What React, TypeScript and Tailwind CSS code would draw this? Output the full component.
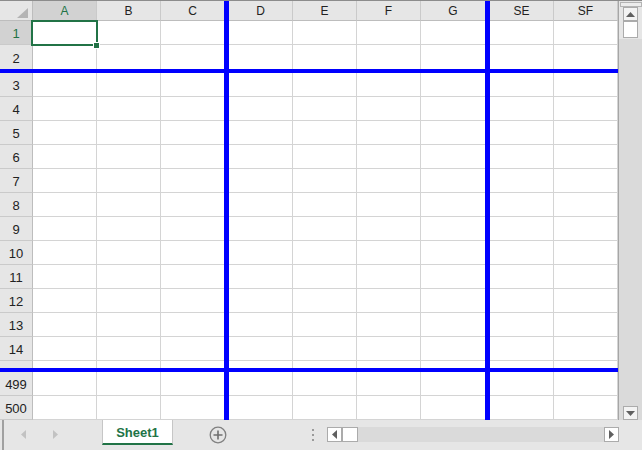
import clsx from 'clsx';

type Col = { id: string; blue?: boolean; w?: string; right?: boolean };

const COLS: Col[] = [
  { id: 'A', w: 'w-[64px]', right: true },
  { id: 'B', w: 'w-[64px]', right: true },
  { id: 'C', w: 'w-[63px]', right: false },
  { id: 'bar1', blue: true },
  { id: 'D', w: 'w-[64px]', right: true },
  { id: 'E', w: 'w-[64px]', right: true },
  { id: 'F', w: 'w-[64px]', right: true },
  { id: 'G', w: 'w-[64px]', right: false },
  { id: 'bar2', blue: true },
  { id: 'SE', w: 'w-[64px]', right: true },
  { id: 'SF', w: 'w-[64px]', right: true },
];

const ROWS = [3, 4, 5, 6, 7, 8, 9, 10, 11, 12, 13, 14];

function BlueV() {
  return <div className="w-[5px] h-full shrink-0 bg-[#0000ff]" />;
}

function BlueH() {
  return <div className="h-[4px] w-full shrink-0 bg-[#0000ff]" />;
}

function HeaderRow() {
  return (
    <div className="flex h-[20px] shrink-0">
      {/* corner */}
      <div className="relative w-[33px] h-full shrink-0 bg-[#e6e6e6] border-r border-b border-[#bdbdbd]">
        <svg className="absolute left-[17px] top-[7px]" width="12" height="11" viewBox="0 0 12 11">
          <polygon points="11,0 11,10 0,10" fill="#b4b4b4" />
        </svg>
      </div>
      {COLS.map((c) =>
        c.blue ? (
          <BlueV key={c.id} />
        ) : (
          <div
            key={c.id}
            className={clsx(
              'h-full shrink-0 flex items-center justify-center pt-[1px] text-[12px] border-b border-b-[#bdbdbd]',
              c.w,
              c.right && 'border-r border-r-[#cacaca]',
              c.id === 'A' ? 'bg-[#d2d2d2] text-[#217346]' : 'bg-[#e6e6e6] text-[#222222]'
            )}
          >
            {c.id}
          </div>
        )
      )}
    </div>
  );
}

interface DataRowProps {
  label?: string;
  selected?: boolean;
  bottom?: boolean;
  tall?: boolean;
}

function DataRow({ label, selected, bottom = true, tall = true }: DataRowProps) {
  return (
    <div className={clsx('flex shrink-0', tall ? 'h-[24px]' : 'h-[7px]')}>
      <div
        className={clsx(
          'w-[33px] h-full shrink-0 flex items-center justify-center pt-[3px] text-[13px] border-r border-r-[#bdbdbd]',
          bottom && 'border-b border-b-[#cacaca]',
          selected ? 'bg-[#d2d2d2] text-[#217346]' : 'bg-[#e6e6e6] text-[#222222]'
        )}
      >
        {label}
      </div>
      {COLS.map((c) =>
        c.blue ? (
          <BlueV key={c.id} />
        ) : (
          <div
            key={c.id}
            className={clsx(
              'h-full shrink-0 bg-white',
              c.w,
              c.right && 'border-r border-r-[#d4d4d4]',
              bottom && 'border-b border-b-[#d4d4d4]'
            )}
          />
        )
      )}
    </div>
  );
}

function VScrollBar() {
  return (
    <div className="w-[24px] h-full shrink-0 flex flex-col items-center border-l border-[#a6a6a6] bg-[#dadada]">
      <div className="w-full flex flex-col items-center bg-[#e6e6e6] pb-[1px]">
        <div className="mt-[1px] w-[22px] h-[5px] border border-[#b4b4b4] bg-[#ececec]" />
        <div className="w-[15px] h-[14px] border border-[#ababab] bg-[#f3f3f3] flex items-center justify-center">
          <svg width="9" height="5" viewBox="0 0 9 5">
            <polygon points="4.5,0 9,5 0,5" fill="#606060" />
          </svg>
        </div>
        <div className="w-[15px] h-[17px] border border-[#ababab] bg-white" />
      </div>
      <div className="flex-1" />
      <div className="w-[15px] h-[14px] border border-[#ababab] bg-[#f3f3f3] flex items-center justify-center">
        <svg width="9" height="5" viewBox="0 0 9 5">
          <polygon points="0,0 9,0 4.5,5" fill="#606060" />
        </svg>
      </div>
    </div>
  );
}

function BottomBar() {
  return (
    <div className="flex h-[30px] shrink-0 bg-[#e6e6e6]">
      <div className="w-[2px] shrink-0" />
      <div className="w-[2px] shrink-0 bg-[#a0a0a0]" />
      {/* sheet navigation */}
      <div className="w-[98px] shrink-0 flex items-center pl-[17px] gap-[27px] pb-[1px]">
        <svg width="5" height="9" viewBox="0 0 5 9">
          <polygon points="5,0 5,9 0,4.5" fill="#c2c2c2" />
        </svg>
        <svg width="5" height="9" viewBox="0 0 5 9">
          <polygon points="0,0 5,4.5 0,9" fill="#c2c2c2" />
        </svg>
      </div>
      {/* active tab */}
      <div className="w-[71px] h-[25px] shrink-0 flex items-center justify-center pt-[2px] bg-white border-l border-r border-[#c6c6c6] border-b-2 border-b-[#217346] text-[13px] font-bold text-[#217346]">
        Sheet1
      </div>
      {/* new sheet */}
      <div className="ml-[36px] flex items-center">
        <svg width="18" height="18" viewBox="0 0 18 18">
          <circle cx="9" cy="9" r="7.8" fill="none" stroke="#808080" strokeWidth="1.3" />
          <path d="M9 4.5v9M4.5 9h9" stroke="#707070" strokeWidth="1.6" />
        </svg>
      </div>
      {/* splitter dots */}
      <div className="ml-[85px] flex flex-col justify-center gap-[3px]">
        <div className="w-[2px] h-[2px] bg-[#9a9a9a]" />
        <div className="w-[2px] h-[2px] bg-[#9a9a9a]" />
        <div className="w-[2px] h-[2px] bg-[#9a9a9a]" />
      </div>
      {/* horizontal scroll */}
      <div className="ml-[13px] mt-[7px] w-[292px] h-[15px] flex bg-[#dadada]">
        <div className="w-[15px] h-full shrink-0 border border-[#ababab] bg-white flex items-center justify-center">
          <svg width="5" height="9" viewBox="0 0 5 9">
            <polygon points="5,0 5,9 0,4.5" fill="#606060" />
          </svg>
        </div>
        <div className="w-[16px] h-full shrink-0 border border-[#ababab] bg-white" />
        <div className="flex-1" />
        <div className="w-[15px] h-full shrink-0 border border-[#ababab] bg-white flex items-center justify-center">
          <svg width="5" height="9" viewBox="0 0 5 9">
            <polygon points="0,0 5,4.5 0,9" fill="#606060" />
          </svg>
        </div>
      </div>
    </div>
  );
}

export default function App() {
  return (
    <div className="relative w-[642px] h-[450px] overflow-hidden bg-white border-t border-[#8c8c8c] font-['Liberation_Sans',Arial,sans-serif]">
      <div className="flex h-[419px]">
        {/* grid */}
        <div className="w-[618px] h-full shrink-0 flex flex-col">
          <HeaderRow />
          <DataRow label="1" selected />
          <DataRow label="2" bottom={false} />
          <BlueH />
          {ROWS.map((r) => (
            <DataRow key={r} label={String(r)} />
          ))}
          <DataRow tall={false} bottom={false} />
          <BlueH />
          <DataRow label="499" />
          <DataRow label="500" />
        </div>
        <VScrollBar />
      </div>
      <BottomBar />

      {/* active cell A1 */}
      <div className="absolute left-[31px] top-[19px] w-[67px] h-[26px] border-2 border-[#217346]" />
      <div className="absolute left-[93px] top-[41px] w-[7px] h-[7px] border border-white bg-[#217346]" />
    </div>
  );
}
